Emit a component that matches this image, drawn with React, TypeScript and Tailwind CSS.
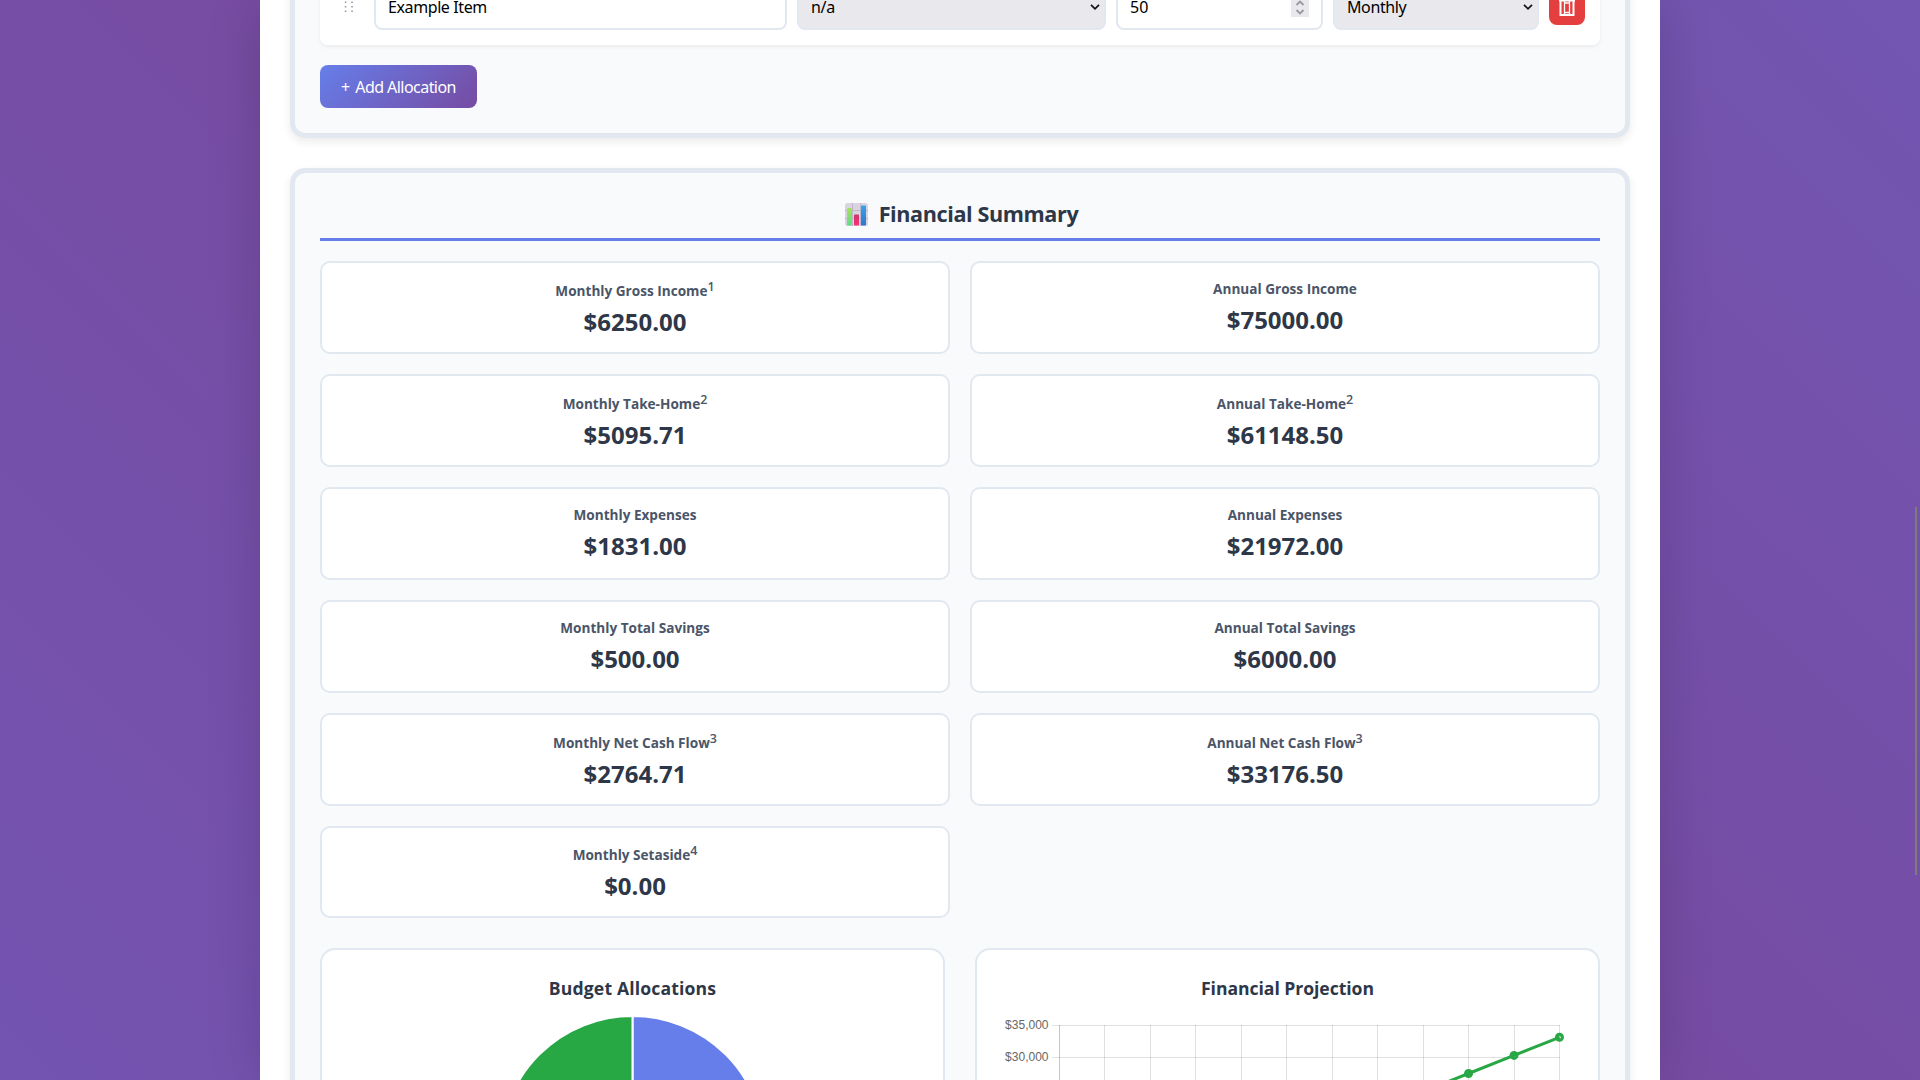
import React from "react";

const summary = [
  { label: "Monthly Gross Income", note: "1", value: "$6250.00", shift: "pt-[2px]" },
  { label: "Annual Gross Income", value: "$75000.00", shift: "" },
  { label: "Monthly Take-Home", note: "2", value: "$5095.71", shift: "pt-[2px]" },
  { label: "Annual Take-Home", note: "2", value: "$61148.50", shift: "pt-[2px]" },
  { label: "Monthly Expenses", value: "$1831.00", shift: "" },
  { label: "Annual Expenses", value: "$21972.00", shift: "" },
  { label: "Monthly Total Savings", value: "$500.00", shift: "" },
  { label: "Annual Total Savings", value: "$6000.00", shift: "" },
  { label: "Monthly Net Cash Flow", note: "3", value: "$2764.71", shift: "pt-[2px]" },
  { label: "Annual Net Cash Flow", note: "3", value: "$33176.50", shift: "pt-[2px]" },
  { label: "Monthly Setaside", note: "4", value: "$0.00", shift: "pt-[1px]" },
];

function Chevron() {
  return (
    <svg width="10" height="8" viewBox="0 0 10 8" fill="none" stroke="#111" strokeWidth="1.7">
      <path d="M1 1.8 L5 5.8 L9 1.8" />
    </svg>
  );
}

function Spinner() {
  return (
    <svg width="18" height="20" viewBox="0 0 18 20" fill="none" stroke="#9a99a1" strokeWidth="1.8">
      <rect width="18" height="20" fill="#e9e9ed" stroke="none" />
      <path d="M5.5 8 L9 4.5 L12.500 8 M5.500 13 L9 16.500 L12.500 13" />
    </svg>
  );
}

function TrashIcon() {
  return (
    <svg width="18" height="20" viewBox="0 0 18 20" fill="none" stroke="#fff">
      <path d="M1 3.500 H17 M6 3.500 V1 H12 V3.500 M2.500 3.500 V18 H15.500 V3.500" strokeWidth="2" />
      <path d="M6.500 4 V17 M11.500 4 V17 M6 6 H12 M6 15.500 H12" strokeWidth="1.300" />
    </svg>
  );
}

function ChartEmoji() {
  return (
    <svg width="23" height="23" viewBox="0 0 23 23">
      <defs>
        <linearGradient id="g1" x1="0" y1="0" x2="0" y2="1"><stop offset="0" stopColor="#a8e05a" /><stop offset="1" stopColor="#5fdc8c" /></linearGradient>
        <linearGradient id="g2" x1="0" y1="0" x2="0" y2="1"><stop offset="0" stopColor="#c8386f" /><stop offset="1" stopColor="#fb2f78" /></linearGradient>
        <linearGradient id="g3" x1="0" y1="0" x2="0" y2="1"><stop offset="0" stopColor="#35a3ee" /><stop offset="1" stopColor="#2f76c9" /></linearGradient>
      </defs>
      <rect width="23" height="23" rx="2.500" fill="#dad4e0" />
      <path d="M7.500 0 V23 M15.500 0 V23 M0 7.500 H23 M0 15.500 H23" stroke="#b9b1c2" strokeWidth="0.8" />
      <rect x="2" y="5" width="5" height="17.500" rx="0.8" fill="url(#g1)" />
      <rect x="9" y="11.500" width="5" height="11" rx="0.8" fill="url(#g2)" />
      <rect x="16" y="2.500" width="5" height="20" rx="0.8" fill="url(#g3)" />
    </svg>
  );
}

function DragHandle() {
  return (
    <svg width="12" height="14" viewBox="0 0 12 14" fill="#8a94a6">
      {[1.5, 6, 10.500].map((y) => (
        <React.Fragment key={y}>
          <rect x="0.800" y={y} width="1.500" height="1.500" />
          <rect x="7.300" y={y} width="1.500" height="1.500" />
        </React.Fragment>
      ))}
    </svg>
  );
}

function PieChart() {
  return (
    <svg className="mx-auto block" width="265" height="264" viewBox="0 0 265 264" stroke="#fff" strokeWidth="2">
      <path d="M132.500 132 V0 A132 132 0 0 1 132.500 264 Z" fill="#667eea" />
      <path d="M132.500 132 V264 A132 132 0 0 1 132.500 0 Z" fill="#28a745" />
    </svg>
  );
}

const ticks = ["$35,000", "$30,000"];

function LineChart() {
  const points = Array.from({ length: 12 }, (_, i) => [59.5 + i * 45.45, 241.500 - (i + 1) * 18.100]);
  return (
    <svg className="block" width="571" height="260" viewBox="0 0 571 260">
      {ticks.map((t, i) => (
        <g key={t}>
          <line x1="52" x2="560" y1={12.5 + i * 32} y2={12.5 + i * 32} stroke="#000" strokeOpacity="0.12" />
          <text x="48.500" y={16 + i * 32} textAnchor="end" fill="#666" className="font-['Liberation_Sans',sans-serif] text-[12px]">{t}</text>
        </g>
      ))}
      {points.map(([x], i) => (
        <line key={x} x1={Math.floor(x) + 0.5} x2={Math.floor(x) + 0.5} y1="12" y2="244" stroke="#000" strokeOpacity={i === 0 ? 0.22 : 0.12} />
      ))}
      <polyline points={points.map((p) => p.join(",")).join(" ")} fill="none" stroke="#28a745" strokeWidth="3" />
      {points.map(([x, y]) => (
        <circle key={x} cx={x} cy={y} r="3" fill="#28a745" fillOpacity="0.3" stroke="#28a745" strokeWidth="3" />
      ))}
    </svg>
  );
}

const field = "flex h-[46px] items-center rounded-lg border-2 border-[#e2e8f0] pl-[12px] text-black";

export default function App() {
  return (
    <div className="relative h-[1080px] w-[1920px] overflow-hidden bg-[linear-gradient(45deg,#7354b1_0%,#774ca2_45%,#764ba2_55%,#7256b2_100%)] font-['Open_Sans',sans-serif]">
      <main className="mx-auto h-[1080px] w-[1400px] overflow-hidden bg-white px-[30px] shadow-[0_0_50px_rgba(0,0,0,0.15)]">
        <section className="-mt-[61px] h-[199px] rounded-[15px] border-[5px] border-[#e2e8f0] bg-[#f8fafc] px-[25px] pt-[25px] shadow-[0_4px_10px_rgba(0,0,0,0.08)]">
          <div className="flex h-[76px] items-center gap-[10px] rounded-lg bg-white px-[15px] font-['Noto_Sans',sans-serif] text-[16px] shadow-[0_2px_4px_rgba(0,0,0,0.06)]">
            <div className="flex w-[29px] justify-center"><DragHandle /></div>
            <div className={field + " w-[413px]"}><span className="tracking-[-0.4px]">Example Item</span></div>
            <div className={field + " w-[309px] justify-between bg-[#e9e9ed] pr-[4px]"}><span className="tracking-[-0.3px]">n/a</span><Chevron /></div>
            <div className={field + " w-[207px] justify-between bg-white pr-[12px]"}><span>50</span><Spinner /></div>
            <div className={field + " w-[206px] justify-between bg-[#e9e9ed] pr-[4px]"}><span className="tracking-[-0.4px]">Monthly</span><Chevron /></div>
            <div className="flex h-9 w-9 items-center justify-center rounded-lg bg-[#e53e3e]"><TrashIcon /></div>
          </div>
          <button className="mt-5 flex h-[43px] w-[157px] items-center justify-center rounded-lg bg-[linear-gradient(135deg,#667eea,#764ba2)] font-['Noto_Sans',sans-serif] text-[16px] whitespace-nowrap text-white">
            <span className="mr-[5px]">+</span>
            <span className="tracking-[-0.55px]">Add Allocation</span>
          </button>
        </section>

        <section className="mt-[30px] h-[1100px] rounded-[15px] border-[5px] border-[#e2e8f0] bg-[#f8fafc] px-[25px] pt-[25px] shadow-[0_4px_10px_rgba(0,0,0,0.08)]">
          <h2 className="flex h-[43px] items-start justify-center gap-[11px] border-b-[3px] border-[#667eea] pl-[3px] text-[21.600px] font-bold text-[#2d3748]">
            <span className="mt-[5px]"><ChartEmoji /></span>
            <span className="leading-[32px] tracking-[-0.4px]">Financial Summary</span>
          </h2>
          <div className="mt-5 grid grid-cols-2 gap-5">
            {summary.map((s) => (
              <div key={s.label} className="h-[93px] rounded-[10px] border-2 border-[#e2e8f0] bg-white pt-[15px] text-center last:h-[92px]">
                <div className={s.shift}>
                  <div className="text-[13.600px] leading-[22px] font-bold text-[#4a5568]">
                    {s.label}
                    {s.note && <sup className="top-[-5px] text-[12.500px] leading-[0] font-semibold">{s.note}</sup>}
                  </div>
                  <div className="mt-[4px] text-[24px] leading-[32px] font-bold text-[#2d3748]">{s.value}</div>
                </div>
              </div>
            ))}
          </div>
          <div className="mt-[30px] grid grid-cols-2 gap-[30px]">
            <div className="h-[400px] rounded-[15px] border-2 border-[#e2e8f0] bg-white pt-[24px] text-center">
              <h3 className="text-[17.600px] leading-[28px] font-bold tracking-[0.15px] text-[#2d3748]">Budget Allocations</h3>
              <div className="mt-[14px]"><PieChart /></div>
            </div>
            <div className="h-[400px] rounded-[15px] border-2 border-[#e2e8f0] bg-white px-[23px] pt-[24px] text-center">
              <h3 className="text-[17.600px] leading-[28px] font-bold tracking-[-0.05px] text-[#2d3748]">Financial Projection</h3>
              <div className="mt-[11px]"><LineChart /></div>
            </div>
          </div>
        </section>
      </main>
      <div className="absolute top-[507px] right-[3px] h-[368px] w-[2px] bg-[#7d7c7a]" />
    </div>
  );
}
